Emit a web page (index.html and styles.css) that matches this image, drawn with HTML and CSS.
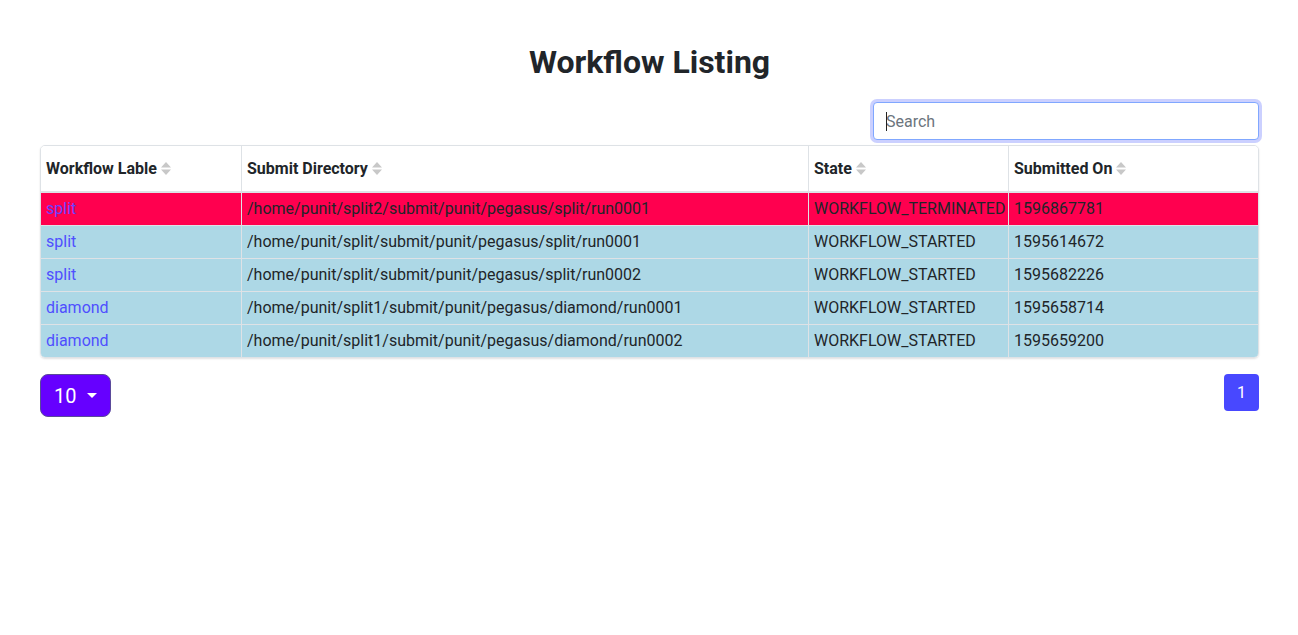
FILE: index.html
```html
<!DOCTYPE html>
<html>
<head>
<meta charset="utf-8">
<title>Workflow Listing</title>
<link rel="stylesheet" href="styles.css">
</head>
<body>
<div class="page">
  <h2 class="title">Workflow Listing</h2>
  <div class="search-row">
    <div class="search-wrap">
      <input class="search" type="text" placeholder="Search">
      <span class="caret-line"></span>
    </div>
  </div>
  <div class="table-wrap">
    <table class="grid">
      <colgroup>
        <col class="c1"><col class="c2"><col class="c3"><col class="c4">
      </colgroup>
      <thead>
        <tr>
          <th>Workflow Lable<svg class="sort" width="10" height="13" viewBox="0 0 10 13"><path d="M5 0 L10 5.5 L0 5.5 Z M0 7.5 L10 7.5 L5 13 Z" fill="#c8c8c8"/></svg></th>
          <th>Submit Directory<svg class="sort" width="10" height="13" viewBox="0 0 10 13"><path d="M5 0 L10 5.5 L0 5.5 Z M0 7.5 L10 7.5 L5 13 Z" fill="#c8c8c8"/></svg></th>
          <th>State<svg class="sort" width="10" height="13" viewBox="0 0 10 13"><path d="M5 0 L10 5.5 L0 5.5 Z M0 7.5 L10 7.5 L5 13 Z" fill="#c8c8c8"/></svg></th>
          <th class="last">Submitted On<svg class="sort" width="10" height="13" viewBox="0 0 10 13"><path d="M5 0 L10 5.5 L0 5.5 Z M0 7.5 L10 7.5 L5 13 Z" fill="#c8c8c8"/></svg></th>
        </tr>
      </thead>
      <tbody>
        <tr class="terminated">
          <td><a href="#">split</a></td>
          <td>/home/punit/split2/submit/punit/pegasus/split/run0001</td>
          <td>WORKFLOW_TERMINATED</td>
          <td class="last">1596867781</td>
        </tr>
        <tr class="started">
          <td><a href="#">split</a></td>
          <td>/home/punit/split/submit/punit/pegasus/split/run0001</td>
          <td>WORKFLOW_STARTED</td>
          <td class="last">1595614672</td>
        </tr>
        <tr class="started">
          <td><a href="#">split</a></td>
          <td>/home/punit/split/submit/punit/pegasus/split/run0002</td>
          <td>WORKFLOW_STARTED</td>
          <td class="last">1595682226</td>
        </tr>
        <tr class="started">
          <td><a href="#">diamond</a></td>
          <td>/home/punit/split1/submit/punit/pegasus/diamond/run0001</td>
          <td>WORKFLOW_STARTED</td>
          <td class="last">1595658714</td>
        </tr>
        <tr class="started lastrow">
          <td><a href="#">diamond</a></td>
          <td>/home/punit/split1/submit/punit/pegasus/diamond/run0002</td>
          <td>WORKFLOW_STARTED</td>
          <td class="last">1595659200</td>
        </tr>
      </tbody>
    </table>
  </div>
  <div class="footer-row">
    <button class="size-btn">10<span class="drop"></span></button>
    <ul class="pager">
      <li><a href="#" class="page-link">1</a></li>
    </ul>
  </div>
</div>
</body>
</html>
```

FILE: styles.css
```css
* { box-sizing: border-box; }
html, body { margin: 0; padding: 0; background: #fff; }
body {
  font-family: Roboto, "Noto Sans", "Liberation Sans", sans-serif;
  font-size: 16px;
  line-height: 24px;
  color: #212529;
}
.page {
  width: 1219px;
  margin: 0 40px;
  padding-top: 42px;
}
.title {
  margin: 0;
  text-align: center;
  font-size: 32px;
  line-height: 40px;
  font-weight: 700;
}
.search-row {
  display: flex;
  justify-content: flex-end;
  margin-top: 20px;
}
.search-wrap {
  position: relative;
  width: 386px;
}
.search {
  display: block;
  width: 100%;
  height: 38px;
  padding: 6px 12px;
  font: inherit;
  color: #495057;
  border: 1px solid #80a7ff;
  border-radius: 4px;
  box-shadow: 0 0 0 3px rgba(140, 150, 255, 0.45);
  outline: none;
}
.search::placeholder { color: #6c757d; }
.caret-line {
  position: absolute;
  left: 13px;
  top: 10px;
  width: 1px;
  height: 19px;
  background: #222;
}
.table-wrap {
  margin-top: 5px;
  width: 1219px;
  border: 1px solid #dee2e6;
  border-radius: 5px;
  overflow: hidden;
  box-shadow: 0 1px 2px rgba(0,0,0,0.12);
}
.grid {
  width: 100%;
  border-collapse: separate;
  border-spacing: 0;
  table-layout: fixed;
}
.c1 { width: 201px; }
.c2 { width: 567px; }
.c3 { width: 200px; }
.c4 { width: 249px; }
.grid th {
  text-align: left;
  font-weight: 700;
  padding: 11px 5px 10px;
  border-right: 1px solid #dee2e6;
  border-bottom: 2px solid #dee2e6;
  white-space: nowrap;
  background: #fff;
}
.grid td {
  padding: 4px 5px;
  border-right: 1px solid #dee2e6;
  border-bottom: 1px solid #dee2e6;
  white-space: nowrap;
  overflow: hidden;
}
.grid .last { border-right: none; }
.grid .lastrow td { border-bottom: none; }
.sort {
  margin-left: 4px;
  vertical-align: -1px;
}
.terminated td { background: #ff004f; }
.started td { background: #add8e6; }
.grid a { color: #4f4fff; text-decoration: none; }
.terminated a { color: #6a40ff; }
.footer-row {
  display: flex;
  justify-content: space-between;
  align-items: flex-start;
  margin-top: 16px;
}
.size-btn {
  display: flex;
  align-items: center;
  height: 43px;
  padding: 0 13px;
  font-family: inherit;
  font-size: 20px;
  color: #fff;
  background: #6600ff;
  border: 1px solid #5a4a9a;
  border-radius: 8px;
}
.drop {
  margin-left: 11px;
  width: 0;
  height: 0;
  border-left: 5px solid transparent;
  border-right: 5px solid transparent;
  border-top: 5px solid #fff;
}
.pager {
  list-style: none;
  margin: 0;
  padding: 0;
  display: flex;
}
.page-link {
  display: block;
  width: 35px;
  height: 37px;
  line-height: 37px;
  text-align: center;
  color: #fff;
  background: #4848ff;
  border-radius: 4px;
  text-decoration: none;
}
```
